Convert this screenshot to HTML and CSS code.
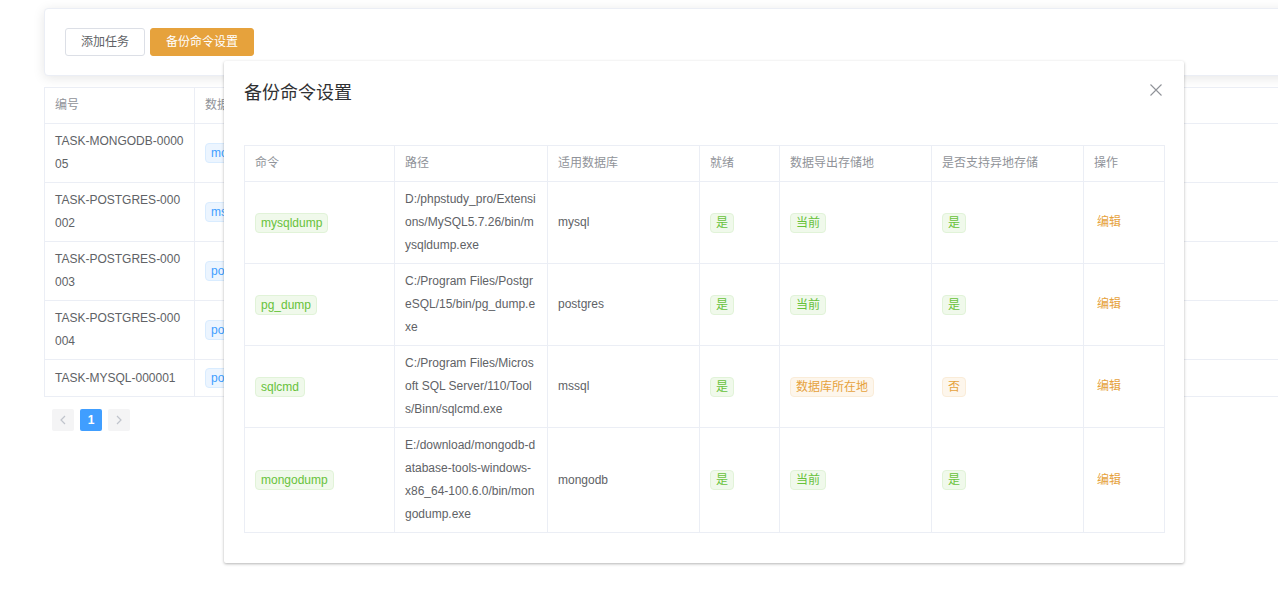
FILE: index.html
```html
<!DOCTYPE html>
<html lang="zh-CN">
<head>
<meta charset="utf-8">
<title>备份任务</title>
<link rel="stylesheet" href="styles.css">
</head>
<body>
<div class="page">
  <div class="card toolbar">
    <button class="btn">添加任务</button>
    <button class="btn btn-warning">备份命令设置</button>
  </div>

  <table class="grid bg-table">
    <colgroup>
      <col class="w150"><col class="w150"><col class="w200"><col class="w200"><col class="w200"><col class="w150"><col class="w300">
    </colgroup>
    <thead>
      <tr><th><div class="cell">编号</div></th><th><div class="cell">数据库</div></th><th><div class="cell">名称</div></th><th><div class="cell">备份周期</div></th><th><div class="cell">备份路径</div></th><th><div class="cell">状态</div></th><th><div class="cell">操作</div></th></tr>
    </thead>
    <tbody>
      <tr><td><div class="cell">TASK-MONGODB-000005</div></td><td><div class="cell"><span class="tag tag-primary">mongodb</span></div></td><td></td><td></td><td></td><td></td><td></td></tr>
      <tr><td><div class="cell">TASK-POSTGRES-000002</div></td><td><div class="cell"><span class="tag tag-primary">mssql</span></div></td><td></td><td></td><td></td><td></td><td></td></tr>
      <tr><td><div class="cell">TASK-POSTGRES-000003</div></td><td><div class="cell"><span class="tag tag-primary">postgres</span></div></td><td></td><td></td><td></td><td></td><td></td></tr>
      <tr><td><div class="cell">TASK-POSTGRES-000004</div></td><td><div class="cell"><span class="tag tag-primary">postgres</span></div></td><td></td><td></td><td></td><td></td><td></td></tr>
      <tr><td><div class="cell">TASK-MYSQL-000001</div></td><td><div class="cell"><span class="tag tag-primary">postgres</span></div></td><td></td><td></td><td></td><td></td><td></td></tr>
    </tbody>
  </table>

  <div class="pagination">
    <button class="pg-btn disabled" aria-label="上一页">
      <svg width="8" height="10" viewBox="0 0 8 10"><path d="M6 1 L2 5 L6 9" fill="none" stroke="currentColor" stroke-width="1.2"/></svg>
    </button>
    <button class="pg-btn active">1</button>
    <button class="pg-btn disabled" aria-label="下一页">
      <svg width="8" height="10" viewBox="0 0 8 10"><path d="M2 1 L6 5 L2 9" fill="none" stroke="currentColor" stroke-width="1.2"/></svg>
    </button>
  </div>
</div>

<div class="dialog">
  <div class="dialog-header">
    <span class="dialog-title">备份命令设置</span>
    <button class="dialog-close" aria-label="关闭">
      <svg width="14" height="14" viewBox="0 0 14 14"><path d="M1.5 1.5 L12.5 12.5 M12.5 1.5 L1.5 12.5" stroke="currentColor" stroke-width="1.1" fill="none"/></svg>
    </button>
  </div>
  <div class="dialog-body">
    <table class="grid cmd-table">
      <colgroup>
        <col class="c1"><col class="c2"><col class="c3"><col class="c4"><col class="c5"><col class="c6"><col class="c7">
      </colgroup>
      <thead>
        <tr><th><div class="cell">命令</div></th><th><div class="cell">路径</div></th><th><div class="cell">适用数据库</div></th><th><div class="cell">就绪</div></th><th><div class="cell">数据导出存储地</div></th><th><div class="cell">是否支持异地存储</div></th><th><div class="cell">操作</div></th></tr>
      </thead>
      <tbody>
        <tr>
          <td><div class="cell"><span class="tag tag-success">mysqldump</span></div></td>
          <td><div class="cell">D:/phpstudy_pro/Extensions/MySQL5.7.26/bin/mysqldump.exe</div></td>
          <td><div class="cell">mysql</div></td>
          <td><div class="cell"><span class="tag tag-success">是</span></div></td>
          <td><div class="cell"><span class="tag tag-success">当前</span></div></td>
          <td><div class="cell"><span class="tag tag-success">是</span></div></td>
          <td><div class="cell"><a class="link-warning">编辑</a></div></td>
        </tr>
        <tr>
          <td><div class="cell"><span class="tag tag-success">pg_dump</span></div></td>
          <td><div class="cell">C:/Program Files/PostgreSQL/15/bin/pg_dump.exe</div></td>
          <td><div class="cell">postgres</div></td>
          <td><div class="cell"><span class="tag tag-success">是</span></div></td>
          <td><div class="cell"><span class="tag tag-success">当前</span></div></td>
          <td><div class="cell"><span class="tag tag-success">是</span></div></td>
          <td><div class="cell"><a class="link-warning">编辑</a></div></td>
        </tr>
        <tr>
          <td><div class="cell"><span class="tag tag-success">sqlcmd</span></div></td>
          <td><div class="cell">C:/Program Files/Microsoft SQL Server/110/Tools/Binn/sqlcmd.exe</div></td>
          <td><div class="cell">mssql</div></td>
          <td><div class="cell"><span class="tag tag-success">是</span></div></td>
          <td><div class="cell"><span class="tag tag-warning">数据库所在地</span></div></td>
          <td><div class="cell"><span class="tag tag-warning">否</span></div></td>
          <td><div class="cell"><a class="link-warning">编辑</a></div></td>
        </tr>
        <tr>
          <td><div class="cell"><span class="tag tag-success">mongodump</span></div></td>
          <td><div class="cell">E:/download/mongodb-database-tools-windows-x86_64-100.6.0/bin/mongodump.exe</div></td>
          <td><div class="cell">mongodb</div></td>
          <td><div class="cell"><span class="tag tag-success">是</span></div></td>
          <td><div class="cell"><span class="tag tag-success">当前</span></div></td>
          <td><div class="cell"><span class="tag tag-success">是</span></div></td>
          <td><div class="cell"><a class="link-warning">编辑</a></div></td>
        </tr>
      </tbody>
    </table>
  </div>
</div>
</body>
</html>
```

FILE: styles.css
```css
html, body {
  margin: 0;
  padding: 0;
  background: #fff;
  overflow: hidden;
}
body {
  font-family: "Liberation Sans", "Noto Sans CJK SC", sans-serif;
  color: #606266;
  font-size: 12px;
  position: relative;
  width: 1278px;
  height: 596px;
}

.page {
  padding: 8px 0 0 44px;
  width: 1350px;
}

.card {
  background: #fff;
  border: 1px solid #EBEEF5;
  border-radius: 4px;
  box-shadow: 0 2px 12px 0 rgba(0, 0, 0, 0.1);
}
.toolbar {
  display: flex;
  gap: 5px;
  padding: 19px 20px;
}

.btn {
  font-family: inherit;
  font-size: 12px;
  line-height: 12px;
  padding: 7px 15px;
  border: 1px solid #DCDFE6;
  border-radius: 3px;
  background: #fff;
  color: #606266;
  cursor: pointer;
}
.btn-warning {
  background: #E6A23C;
  border-color: #E6A23C;
  color: #fff;
}

.grid {
  border-collapse: collapse;
  table-layout: fixed;
  background: #fff;
}
.grid th, .grid td {
  border: 1px solid #EBEEF5;
  padding: 6px 0;
  text-align: left;
  vertical-align: middle;
  font-size: 12px;
  line-height: 23px;
}
.grid th {
  color: #909399;
  font-weight: normal;
}
.grid td {
  color: #606266;
}
.cell {
  padding: 0 10px;
  word-break: break-all;
  line-height: 23px;
}

.bg-table {
  margin-top: 11px;
  width: 1350px;
}
.bg-table th, .bg-table td {
  border-left: none;
  border-right: none;
}
.bg-table td {
  height: 24px;
}
.bg-table th:first-child, .bg-table td:first-child {
  border-left: 1px solid #EBEEF5;
}
.bg-table th:nth-child(-n+6), .bg-table td:nth-child(-n+6) {
  border-right: 1px solid #EBEEF5;
}
.w150 { width: 150px; }
.w200 { width: 200px; }
.w300 { width: 300px; }

.tag {
  display: inline-block;
  box-sizing: border-box;
  height: 20px;
  line-height: 18px;
  padding: 0 5px;
  font-size: 12px;
  border: 1px solid;
  border-radius: 4px;
  white-space: nowrap;
  vertical-align: middle;
}
.tag-primary {
  background: #ecf5ff;
  border-color: #d9ecff;
  color: #409EFF;
}
.tag-success {
  background: #f0f9eb;
  border-color: #e1f3d8;
  color: #67C23A;
}
.tag-warning {
  background: #fdf6ec;
  border-color: #faecd8;
  color: #E6A23C;
}
.link-warning {
  color: #E6A23C;
  cursor: pointer;
  margin-left: 3px;
}

.pagination {
  display: flex;
  padding: 2px 5px;
  margin-top: 10px;
}
.pg-btn {
  box-sizing: border-box;
  min-width: 22px;
  height: 22px;
  margin: 0 3px;
  padding: 0;
  border: none;
  border-radius: 2px;
  background: #f4f4f5;
  color: #606266;
  font-family: inherit;
  font-size: 12px;
  font-weight: bold;
  display: flex;
  align-items: center;
  justify-content: center;
}
.pg-btn.disabled {
  color: #C0C4CC;
}
.pg-btn.active {
  background: #409EFF;
  color: #fff;
}

.dialog {
  position: absolute;
  top: 61px;
  left: 224px;
  width: 960px;
  background: #fff;
  border-radius: 2px;
  box-shadow: 0 1px 3px rgba(0, 0, 0, 0.3);
}
.dialog-header {
  position: relative;
  padding: 20px 20px 10px;
}
.dialog-title {
  font-size: 18px;
  line-height: 24px;
  color: #303133;
}
.dialog-close {
  position: absolute;
  top: 21px;
  right: 20px;
  width: 16px;
  height: 16px;
  padding: 0;
  border: none;
  background: transparent;
  color: #909399;
  display: flex;
  align-items: center;
  justify-content: center;
}
.dialog-body {
  padding: 30px 20px;
}
.cmd-table {
  width: 920px;
}
.c1 { width: 150px; }
.c2 { width: 153px; }
.c3 { width: 152px; }
.c4 { width: 80px; }
.c5 { width: 152px; }
.c6 { width: 152px; }
.c7 { width: 81px; }
```
